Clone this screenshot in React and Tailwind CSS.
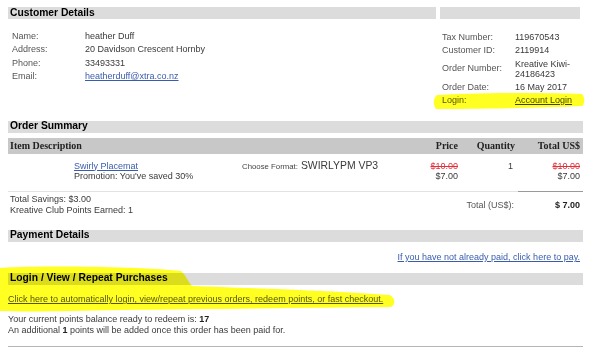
const link = "text-[#3a5cad] underline";

function Bar({ children, className = "" }) {
  return (
    <div className={`flex h-[12px] items-center bg-[#dcdcdc] pl-[2px] text-[10.3px] font-bold leading-none text-black ${className}`}>
      {children}
    </div>
  );
}

function Row({ label, children, cols = "grid-cols-[73px_1fr]", className = "" }) {
  return (
    <div className={`grid ${cols} items-center ${className}`}>
      <span className="text-[#555]">{label}</span>
      <span>{children}</span>
    </div>
  );
}

function Highlight() {
  return (
    <svg className="pointer-events-none absolute inset-0 mix-blend-multiply" width="600" height="347" viewBox="0 0 600 347">
      <path
        d="M437,95 C470,93 540,92 582,94 C585,97 585,104 582,106 C540,108 470,109 436,109 C433,105 433,98 437,95 Z"
        fill="#ffff22"
      />
      <path
        d="M0,268 C50,265 140,267 181,271 C186,275 188,282 192,286 C240,288 300,289 390,295 C395,298 396,304 391,307 C300,308 200,309 120,310 C70,311 30,312 0,311 Z"
        fill="#ffff22"
      />
    </svg>
  );
}

export default function App() {
  return (
    <div className="relative h-[347px] w-[600px] overflow-hidden bg-white font-['Liberation_Sans',Arial,sans-serif] text-[9px] text-[#3a3a3a]">
      <div className="ml-[8px] w-[575px] pt-[7px]">
        {/* Customer details */}
        <section className="flex gap-[4px]">
          <div className="w-[428px]">
            <Bar>Customer Details</Bar>
            <div className="mt-[10.5px] pl-[4px] leading-[13.5px]">
              <Row label="Name:">heather Duff</Row>
              <Row label="Address:">20 Davidson Crescent Hornby</Row>
              <Row label="Phone:">33493331</Row>
              <Row label="Email:">
                <a className={link} href="#">heatherduff@xtra.co.nz</a>
              </Row>
            </div>
          </div>
          <div className="w-[140px]">
            <Bar />
            <div className="mt-[11.5px] pl-[2px] leading-[13.5px]">
              <Row label="Tax Number:">119670543</Row>
              <Row label="Customer ID:">2119914</Row>
              <Row label="Order Number:">
                <span className="block py-[1.5px] leading-[10px]">
                  Kreative Kiwi-
                  <br />
                  24186423
                </span>
              </Row>
              <Row label="Order Date:">16 May 2017</Row>
              <Row label="Login:">
                <a className="text-[#444] underline" href="#">Account Login</a>
              </Row>
            </div>
          </div>
        </section>

        {/* Order summary */}
        <section className="mt-[13px]">
          <Bar>Order Summary</Bar>
          <div className="mt-[5px] grid h-[16px] grid-cols-[1fr_60px_57px_65px] items-center bg-[#c8c8c8] font-['Liberation_Serif','Times_New_Roman',serif] text-[10px] font-bold text-[#222]">
            <span className="pl-[2px]">Item Description</span>
            <span className="pr-[3px] text-right">Price</span>
            <span className="pr-[3px] text-right">Quantity</span>
            <span className="pr-[3px] text-right">Total US$</span>
          </div>
          <div className="grid grid-cols-[1fr_60px_57px_65px] pb-[9px] pt-[7px] leading-[10.5px]">
            <div className="flex">
              <div className="w-[234px] pl-[66px]">
                <a className={link} href="#">Swirly Placemat</a>
                <div>Promotion: You've saved 30%</div>
              </div>
              <div className="flex items-baseline gap-[3px]">
                <span className="text-[7.8px] text-[#444]">Choose Format:</span>
                <span className="text-[10.4px]">SWIRLYPM VP3</span>
              </div>
            </div>
            <div className="pr-[3px] text-right">
              <div className="text-[#e0303a] line-through">$10.00</div>
              <div>$7.00</div>
            </div>
            <div className="pr-[5px] text-right">1</div>
            <div className="pr-[3px] text-right">
              <div className="text-[#e0303a] line-through">$10.00</div>
              <div>$7.00</div>
            </div>
          </div>
          <div className="flex h-[1px]">
            <div className="flex-1 bg-[#e2e2e2]" />
            <div className="w-[65px] bg-[#9a9a9a]" />
          </div>
          <div className="flex pt-[2.5px] leading-[11px]">
            <div className="flex-1 pl-[2px]">
              <div>Total Savings: $3.00</div>
              <div>Kreative Club Points Earned: 1</div>
            </div>
            <div className="flex items-center pr-[4px] text-[#555]">Total (US$):</div>
            <div className="flex w-[65px] items-center justify-end pr-[3px] font-bold text-[#222]">$ 7.00</div>
          </div>
        </section>

        {/* Payment details */}
        <section className="mt-[13.5px]">
          <Bar>Payment Details</Bar>
          <div className="mt-[10.5px] pr-[3px] text-right leading-[11px]">
            <a className={link} href="#">If you have not already paid, click here to pay.</a>
          </div>
        </section>

        {/* Login / view / repeat */}
        <section className="mt-[9.5px]">
          <Bar>Login / View / Repeat Purchases</Bar>
          <div className="mt-[9.5px] leading-[11px]">
            <a className="text-[#555] underline" href="#">
              Click here to automatically login, view/repeat previous orders, redeem points, or fast checkout.
            </a>
          </div>
          <div className="mt-[9px] leading-[11px]">
            <div>
              Your current points balance ready to redeem is: <b className="text-[#222]">17</b>
            </div>
            <div>
              An additional <b className="text-[#222]">1</b> points will be added once this order has been paid for.
            </div>
          </div>
          <div className="mt-[9.5px] h-[1px] bg-[#b5b5b5]" />
        </section>
      </div>
      <Highlight />
    </div>
  );
}
